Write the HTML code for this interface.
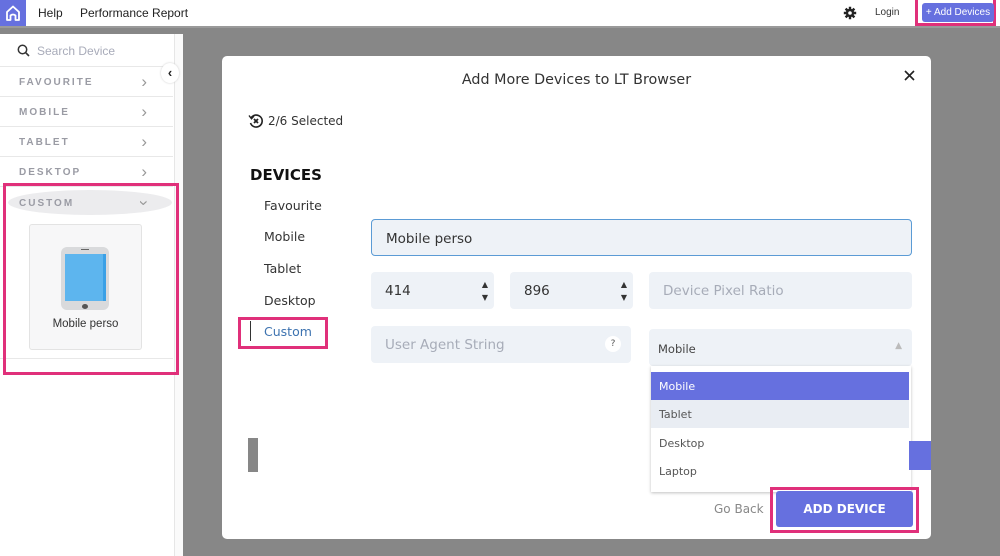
<!DOCTYPE html>
<html><head><meta charset="utf-8"><style>
*{box-sizing:border-box;margin:0;padding:0}
body{width:1000px;height:556px;overflow:hidden;background:#878787;font-family:"Liberation Sans",sans-serif;position:relative}
.abs{position:absolute}
.top{left:0;top:0;width:1000px;height:26px;background:#fff}
.side{left:0;top:34px;width:175px;height:522px;background:#fff;border-right:1px solid #e6e6e6}
.strip{left:175px;top:34px;width:8px;height:522px;background:#fafafa}
.cat{position:absolute;left:0;width:173px;height:30px;border-bottom:1px solid #e8e8e8;font-size:10px;letter-spacing:2px;color:#9a9ba4;font-weight:bold;padding:10px 0 0 19px}
.cat span{position:absolute;right:26px;top:5px;font-size:17px;letter-spacing:0;font-weight:normal;color:#999}
.modal{left:222px;top:56px;width:709px;height:483px;background:#fff;border-radius:5px}
.in{position:absolute;background:#eef2f7;border-radius:4px;font-family:"DejaVu Sans","Liberation Sans",sans-serif;font-size:13.5px;color:#333}
.ph{color:#a7acb8}
.pink{position:absolute;border:3px solid #e0307a}
.dd{font-family:"DejaVu Sans","Liberation Sans",sans-serif;font-size:11px;color:#555;position:absolute;left:0;width:258px;height:28px;padding:8px 0 0 8px}
.nav{position:absolute;left:42px;font-family:"DejaVu Sans","Liberation Sans",sans-serif;font-size:12.5px;color:#333}
</style></head><body>
<div class="abs top"></div>
<div class="abs" style="left:0;top:0;width:26px;height:26px;background:#6670df"></div>
<svg class="abs" style="left:5px;top:4px" width="16" height="18" viewBox="0 0 16 18"><path d="M2 8 L8 2.5 L14 8 V16 H10.5 V11.5 Q8 9.5 5.5 11.5 V16 H2 Z" fill="none" stroke="#fff" stroke-width="1.8" stroke-linejoin="round"/></svg>
<div class="abs" style="left:38px;top:6px;font-size:12px;color:#222">Help</div>
<div class="abs" style="left:80px;top:6px;font-size:12px;color:#222">Performance Report</div>
<svg class="abs" style="left:843px;top:6px" width="14" height="14" viewBox="0 0 14 14"><g stroke="#222" stroke-width="2.4"><path d="M7 0.8V13.2M0.8 7H13.2M2.6 2.6L11.4 11.4M11.4 2.6L2.6 11.4"/></g><circle cx="7" cy="7" r="4.2" fill="#222"/><circle cx="7" cy="7" r="1.8" fill="#fff"/></svg>
<div class="abs" style="left:875px;top:7px;font-size:10px;color:#333">Login</div>
<div class="pink" style="left:915px;top:0;width:81px;height:26px;border-top:none"></div>
<div class="abs" style="left:922px;top:3px;width:72px;height:19px;background:#6670df;border-radius:3px;color:#fff;font-size:10px;text-align:center;line-height:19px">+ Add Devices</div>
<div class="abs" style="left:0;top:26px;width:1000px;height:2px;background:#9a9a9a"></div>

<div class="abs side">
 <svg class="abs" style="left:17px;top:10px" width="13" height="13" viewBox="0 0 13 13"><circle cx="5.5" cy="5.5" r="4.2" fill="none" stroke="#333" stroke-width="1.5"/><path d="M8.6 8.6 L12 12" stroke="#333" stroke-width="1.6"/></svg>
 <div class="abs" style="left:37px;top:10px;font-size:12px;color:#a8abb9">Search Device</div>
 <div class="abs" style="left:0;top:32px;width:173px;height:1px;background:#e8e8e8"></div>
 <div class="cat" style="top:33px">FAVOURITE<span>›</span></div>
 <div class="cat" style="top:63px">MOBILE<span>›</span></div>
 <div class="cat" style="top:93px">TABLET<span>›</span></div>
 <div class="cat" style="top:123px">DESKTOP<span>›</span></div>
 <div class="abs" style="left:8px;top:156px;width:164px;height:25px;background:#ececee;border-radius:50%"></div>
 <div class="cat" style="top:154px;border:none">CUSTOM<span style="transform:rotate(90deg);top:5px">›</span></div>
 <div class="abs" style="left:29px;top:190px;width:113px;height:126px;background:#f7f7f8;border:1px solid #e3e3e3;border-radius:3px"></div>
 <div class="abs" style="left:61px;top:213px;width:48px;height:63px;background:#d9dadc;border-radius:6px"></div>
 <div class="abs" style="left:65px;top:220px;width:40px;height:47px;background:#5db5ee"></div>
 <div class="abs" style="left:103px;top:220px;width:3px;height:47px;background:#3aa0e6"></div>
 <div class="abs" style="left:82px;top:270px;width:6px;height:5px;background:#555;border-radius:50%"></div>
 <div class="abs" style="left:81px;top:215px;width:8px;height:1px;background:#666"></div>
 <div class="abs" style="left:29px;top:284px;width:113px;text-align:center;font-size:11.5px;color:#333">Mobile perso</div>
 <div class="abs" style="left:0;top:324px;width:173px;height:1px;background:#e8e8e8"></div>
</div>
<div class="abs strip"></div>
<div class="abs" style="left:161px;top:63px;width:18px;height:20px;border-radius:50%;background:#fff;box-shadow:0 0 2px #ccc;font-size:13px;text-align:center;line-height:19px;color:#222;font-weight:bold">‹</div>
<div class="pink" style="left:3px;top:183px;width:176px;height:192px"></div>

<div class="abs modal">
 <div class="abs" style="left:0;top:16px;width:709px;text-align:center;font-family:'DejaVu Sans',sans-serif;font-size:14.3px;color:#333">Add More Devices to LT Browser</div>
 <svg class="abs" style="left:682px;top:14px" width="11" height="11" viewBox="0 0 11 11"><path d="M1 1 L10 10 M10 1 L1 10" stroke="#222" stroke-width="1.6"/></svg>
 <svg class="abs" style="left:26px;top:57px" width="16" height="16" viewBox="0 0 16 16"><path d="M3 5 A6 6 0 1 1 2.5 10" fill="none" stroke="#222" stroke-width="1.6"/><path d="M1 2.5 L3.5 5.8 L6 3" fill="none" stroke="#222" stroke-width="1.4"/><path d="M6 6 L10 10 M10 6 L6 10" stroke="#222" stroke-width="1.8"/></svg>
 <div class="abs" style="left:46px;top:58px;font-family:'DejaVu Sans',sans-serif;font-size:12px;color:#333">2/6 Selected</div>
 <div class="abs" style="left:28px;top:110px;font-family:'DejaVu Sans',sans-serif;font-size:15px;font-weight:bold;color:#111">DEVICES</div>
 <div class="nav" style="top:142px">Favourite</div>
 <div class="nav" style="top:173px">Mobile</div>
 <div class="nav" style="top:205px">Tablet</div>
 <div class="nav" style="top:237px">Desktop</div>
 <div class="abs" style="left:28px;top:265px;width:1px;height:20px;background:#333"></div>
 <div class="nav" style="top:268px;color:#3d73b0">Custom</div>
 <div class="pink" style="left:16px;top:261px;width:90px;height:32px"></div>
 <div class="in" style="left:149px;top:163px;width:541px;height:37px;border:1px solid #5b9bd5;padding:11px 0 0 14px">Mobile perso</div>
 <div class="in" style="left:149px;top:216px;width:123px;height:37px;padding:11px 0 0 14px">414<span class="abs" style="right:6px;top:6px;font-size:8px;line-height:13px">▲<br>▼</span></div>
 <div class="in" style="left:288px;top:216px;width:123px;height:37px;padding:11px 0 0 14px">896<span class="abs" style="right:6px;top:6px;font-size:8px;line-height:13px">▲<br>▼</span></div>
 <div class="in ph" style="left:427px;top:216px;width:263px;height:37px;padding:11px 0 0 14px">Device Pixel Ratio</div>
 <div class="in ph" style="left:149px;top:270px;width:260px;height:37px;padding:11px 0 0 14px">User Agent String<span class="abs" style="right:10px;top:10px;width:16px;height:16px;border-radius:50%;background:#fff;font-size:9px;color:#555;text-align:center;line-height:16px">?</span></div>
 <div class="in" style="left:427px;top:273px;width:263px;height:37px;font-size:11.5px;color:#444;padding:13px 0 0 9px">Mobile<span class="abs" style="right:10px;top:12px;font-size:9px;color:#bbb">▲</span></div>
 <div class="abs" style="left:429px;top:310px;width:260px;height:126px;background:#fff;box-shadow:0 1px 3px rgba(0,0,0,.25)">
  <div class="dd" style="top:6px;background:#6670df;color:#fff">Mobile</div>
  <div class="dd" style="top:34px;background:#e9edf3">Tablet</div>
  <div class="dd" style="top:63px">Desktop</div>
  <div class="dd" style="top:91px">Laptop</div>
 </div>
 <div class="abs" style="left:687px;top:385px;width:22px;height:29px;background:#6670df"></div>
 <div class="abs" style="left:26px;top:382px;width:10px;height:34px;background:#878787"></div>
 <div class="abs" style="left:492px;top:446px;font-family:'DejaVu Sans',sans-serif;font-size:12px;color:#888">Go Back</div>
 <div class="pink" style="left:548px;top:431px;width:149px;height:46px"></div>
 <div class="abs" style="left:554px;top:435px;width:137px;height:36px;background:#6670df;border-radius:3px;color:#fff;font-family:'DejaVu Sans',sans-serif;font-weight:bold;font-size:12px;text-align:center;line-height:36px">ADD DEVICE</div>
</div>
</body></html>
